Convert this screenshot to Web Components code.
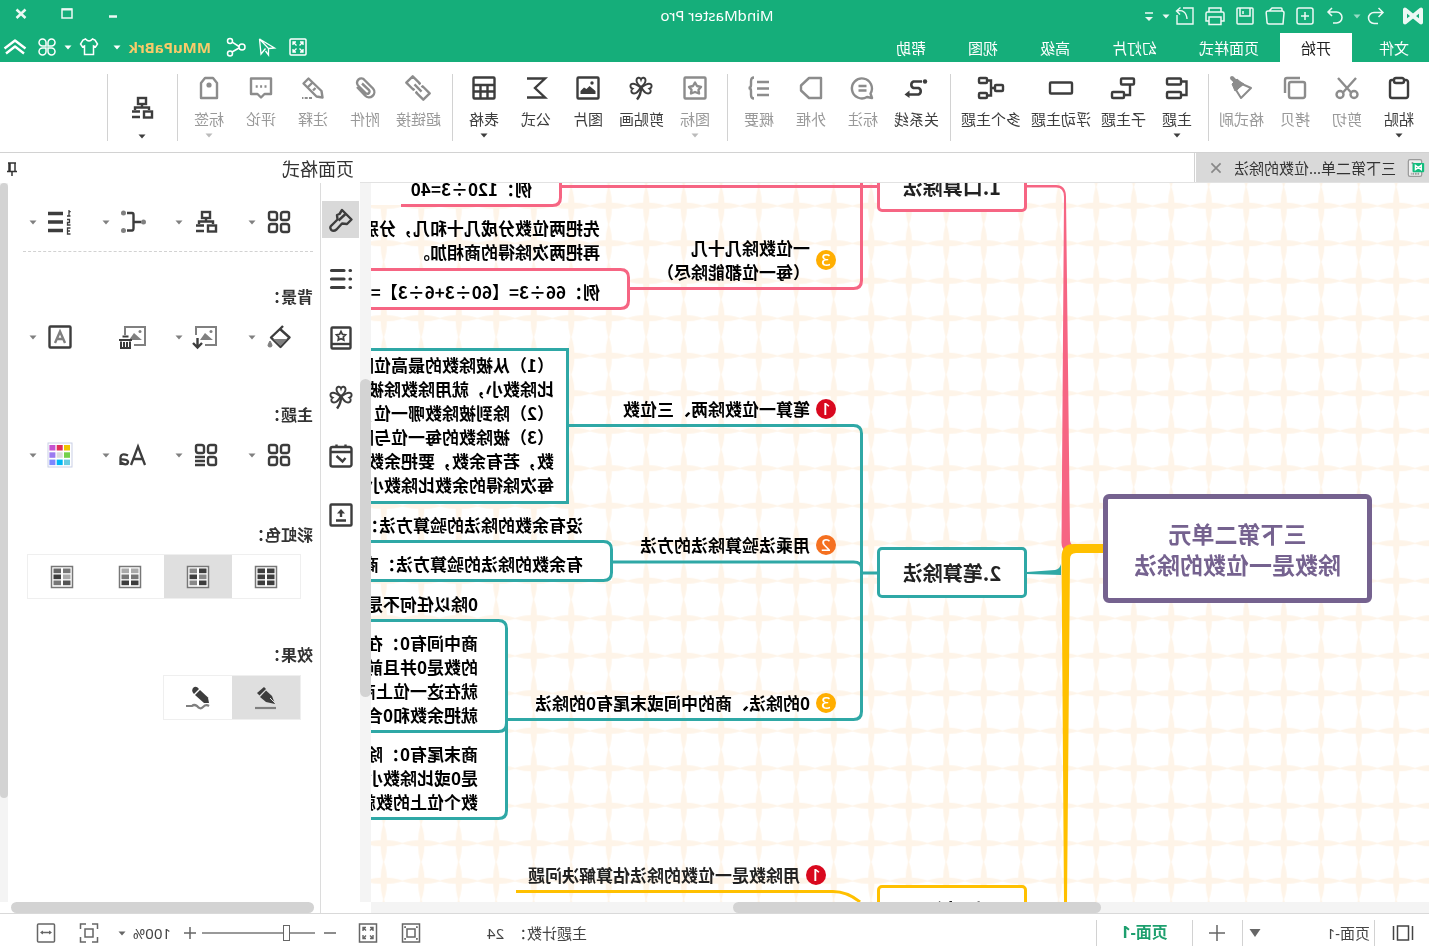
<!DOCTYPE html>
<html lang="zh-CN">
<head>
<meta charset="utf-8">
<title>MindMaster Pro</title>
<style>
  html, body { margin: 0; height: 100%; overflow: hidden; background: #fff; }
  body { font: 15px/20px "Noto Sans", "Noto Sans CJK SC", sans-serif; color: #333; }
</style>
</head>
<body>
<mind-app></mind-app>
<script>
const RESET = `
  *, *::before, *::after { box-sizing: border-box; }
  button { font: inherit; color: inherit; background: none; border: 0; padding: 0; margin: 0; display: inline-flex; align-items: center; justify-content: center; }
  a { color: inherit; text-decoration: none; }
`;
function define(name, html, setup) {
  customElements.define(name, class extends HTMLElement {
    constructor() {
      super();
      this.attachShadow({ mode: 'open' });
    }
    connectedCallback() {
      const t = document.createElement('template');
      t.innerHTML = `<style>${RESET}</style>` + (typeof html === 'function' ? html(this) : html);
      this.shadowRoot.replaceChildren(t.content.cloneNode(true));
      if (setup) setup(this);
    }
  });
}

const clover = '<g stroke-width="1.900"><path d="M12 11C8 8 7.500 6 7.500 4.500C7.500 1.500 11 .5 12 3.500C13 .5 16.500 1.500 16.500 4.500C16.500 6 16 8 12 11Z"/><path d="M11.500 11.500C9 16.500 7.500 17.500 5 17.500C2 17.500 1.500 14 3.500 12.700C.5 11.500 .8 7.700 4 7.700C7 7.700 9 9.500 11.500 11.500Z"/><path d="M12.500 11.500C15 16.500 16.500 17.500 19 17.500C22 17.500 22.500 14 20.500 12.700C23.500 11.500 23.200 7.700 20 7.700C17 7.700 15 9.500 12.500 11.500Z"/><path d="M12 12C12 17 13.500 20.500 16 23.500" stroke-width="2.400"/></g>';
const leafs = '<path d="M2 3.500Q2 2 3.500 2H7.500Q10 2 10 4.500V8.500Q10 10 8.500 10H4.500Q2 10 2 7.500Z"/><path d="M14 4.500Q14 2 16.500 2H20.500Q22 2 22 3.500V7.500Q22 10 19.500 10H15.500Q14 10 14 8.500Z"/><path d="M2 16.500Q2 14 4.500 14H8.500Q10 14 10 15.500V19.500Q10 22 7.500 22H3.500Q2 22 2 20.500Z"/>';
const tree = '<rect x="8" y="2" width="8" height="6"/><path d="M12 8V11M5 14V11.500H19V14"/><rect x="2" y="15.500" width="8" height="6"/><path d="M14 15.500H22M14 21H22"/>';
const tiles = c => '<rect x="1.500" y="1.500" width="21" height="21" stroke="#777" stroke-width="1.500" fill="#fff"/><g stroke="none">' +
  c.map((f, i) => `<rect x="${i % 2 ? 13 : 3.5}" y="${3.5 + Math.floor(i / 2) * 6}" width="7.500" height="4.700" fill="${f}"/>`).join('') + '</g>';
const pic = '<g stroke="#808080" stroke-width="2"><path d="M2 10V2H22V20H13"/></g><path d="M5 15L11 8L16 13V15Z" fill="#808080" stroke="none"/><circle cx="6.500" cy="6.500" r="1.500" fill="#808080" stroke="none"/>';
const picFlip = '<g stroke="#808080" stroke-width="2"><path d="M13 20H2V2H22V10"/></g><path d="M5 15L8 12.500L13 8L18 15Z" fill="#808080" stroke="none"/><circle cx="7" cy="6.500" r="1.500" fill="#808080" stroke="none"/>';
const ICONS = {
  logo: '<path d="M4 5.500V18.500L20 5.500V18.500Z" stroke-width="4" stroke-linejoin="round"/>',
  undo: '<path d="M9.500 4L5 8.500L9.500 13M5 8.500H14A5.500 5.500 0 0 1 14 19.500H10" stroke-width="1.500"/>',
  redo: '<path d="M15 4L19 8L15 12M19 8H10.500A5 5 0 0 0 10.500 19H14" stroke-width="1.500"/>',
  add: '<rect x="4" y="4" width="16" height="16" rx="2"/><path d="M12 8V16M8 12H16"/>',
  open: '<path d="M4 20L3 9Q3 7 5 7H19Q21 7 20.800 9L20 18Q20 20 18 20H4ZM5 7V5Q5 4 6 4H15L18 7" stroke-width="1.500"/>',
  save: '<rect x="4" y="4" width="16" height="16" rx="1"/><path d="M7 4V12H17V4M14 7V10"/>',
  print: '<path d="M6 8V4H18V8M6 17H3V9.500Q3 8 4.500 8H19.500Q21 8 21 9.500V17H18M6 13H18V20.500H6Z" stroke-width="1.500"/>',
  export: '<path d="M13 4H4V20H20V11M14 4H13M20 7Q11 5 10 15M16.500 3.500L20.500 7L17 10.500" stroke-width="1.400"/>',
  more: '<path d="M8 9H16" stroke-width="1.500"/><path d="M8 13H16L12 17Z" fill="currentColor" stroke="none"/>',
  min: '<path d="M8 14.500H16" stroke-width="2.500"/>',
  max: '<rect x="7" y="7" width="10" height="9"/><path d="M7 7.500H17" stroke-width="2"/>',
  close: '<path d="M7.500 7.500L16.500 16M16.500 7.500L7.500 16" stroke-width="2.500"/>',
  fit: '<rect x="4" y="4" width="16" height="16" rx="1" stroke-width="1.500"/><path d="M7 10V7H10M14 7H17V10M17 14V17H14M10 17H7V14M7 7L10.500 10.500M17 7L13.500 10.500M17 17L13.500 13.500M7 17L10.500 13.500" stroke-width="1.300"/>',
  cursor: '<path d="M19.500 4L4.500 13L10.500 13.500M19.500 4L18 19L13.500 13.500M19.500 4L10.500 13.500V20L13.500 16" stroke-width="1.300"/>',
  share: '<circle cx="6" cy="12" r="3"/><circle cx="18" cy="6" r="2.500"/><circle cx="18" cy="18.500" r="2.500"/><path d="M9 11.500L15.800 7.200M9 13L16 17"/>',
  shirt: '<path d="M8.500 4Q12 8 15.500 4L18 5L20.500 9L18.500 12L16.500 11V19.500H7.500V11L5.500 12L3.500 9L6 5Z" stroke-width="1.500"/>',
  cmd: '<path d="M11 11H7.500A3.500 3.500 0 1 1 11 7.500ZM13 11V7.500A3.500 3.500 0 1 1 16.500 11ZM11 13V16.500A3.500 3.500 0 1 1 7.500 13ZM13 13H16.500A3.500 3.500 0 1 1 13 16.500Z"/>',
  collapse: '<path d="M1.500 13.500L12 5.500L22.500 13.500M3 18.500L12 11.500L21 18.500" stroke-width="2.400" stroke-linejoin="round"/>',
  paste: '<rect x="3" y="4" width="18" height="18" rx="2"/><rect x="7" y="2" width="10" height="5" rx="2" fill="#fff"/>',
  cut: '<path d="M3 2L16.500 17M21 2L7.500 17"/><circle cx="5" cy="18.500" r="3.500"/><circle cx="19" cy="18.500" r="3.500"/>',
  copy: '<rect x="2" y="6" width="16" height="16" rx="2"/><path d="M7 2H20Q22 2 22 4V17"/>',
  brush: '<path d="M2 12L11 8L17 14L12 22Z" stroke-width="2" stroke-linejoin="round"/><path d="M18 5L21 2" stroke-width="4" stroke-linecap="round"/><path d="M9 8L13 5.500L16 3L21 8L18 15Z" fill="currentColor" stroke-width="1"/>',
  topic: '<path d="M8 5.500H2.500V19H8"/><rect x="8" y="2.500" width="14" height="6" rx="1"/><rect x="8" y="16" width="14" height="6" rx="1"/>',
  subtopic: '<rect x="1" y="2.500" width="13" height="6" rx="1"/><path d="M5 9V19H11"/><rect x="11" y="16" width="12" height="6" rx="1"/>',
  float: '<rect x="1" y="6.500" width="22" height="11" rx="1"/>',
  multi: '<rect x="0" y="9" width="8" height="6" rx="1"/><path d="M8 12H12M16 4.500H12V19.500H16"/><rect x="16" y="2" width="8" height="5" rx="1"/><rect x="16" y="17" width="8" height="5" rx="1"/>',
  relation: '<path d="M6 5.500H14.500A3.500 3.500 0 0 1 14.500 12H9.500A3.500 3.500 0 0 0 9.500 18.500H19" stroke-width="2.600"/><circle cx="3" cy="5.500" r="2.200" fill="currentColor" stroke="none"/><path d="M18.500 14.500L23.500 18.500L18.500 22Z" fill="currentColor" stroke="none"/>',
  callout: '<path d="M3 22L4.500 17.500A10 10 0 1 1 8 21Z" stroke-linejoin="round"/><path d="M8.500 10H16.500M8.500 14.500H16.500"/>',
  frame: '<path d="M2 2H14L22 9.500V14.500L14 22H2Z" stroke-linejoin="round"/>',
  summary: '<path d="M2 6H14M2 12.500H14M2 19H14M17 1.500Q20 1.500 20 5V9Q20 12 22.500 12Q20 12 20 15V19Q20 22.500 17 22.500"/>',
  star: '<rect x="1.500" y="1.500" width="21" height="21" rx="1"/><path d="M12 6.500L14 10L18 11L15.500 13.700L16 17.500L12 16L8 17.500L8.500 13.700L6 11L10 10Z" stroke-linejoin="round"/>',
  clover: clover,
  picture: '<rect x="1.500" y="1.500" width="21" height="21" rx="1"/><path d="M4.500 18V15L10.500 10L13.500 13L16 11.500L19.500 15V18Z" fill="currentColor" stroke="none"/><circle cx="8" cy="7" r="1.700" fill="currentColor" stroke="none"/>',
  sigma: '<path d="M21 2.500H3L13 12L3 21.500H21"/>',
  table: '<rect x="1.500" y="1.500" width="21" height="21" rx="1"/><path d="M2 9H22M2 15.500H22M8.500 9V22M15.500 9V22"/>',
  link: '<g transform="rotate(-45 12 12)" stroke-linejoin="round"><path d="M10 15V16.500H0V7.500H10V9M14 9V7.500H24V16.500H14V15M7 12H17"/></g>',
  clip: '<path d="M20 11L12 19.500A5 5 0 0 1 4 12.500L12.500 4A4 4 0 0 1 19 9.500L11.500 17A2 2 0 0 1 8 14L15 7.500"/>',
  pencil: '<path d="M2.500 21.500L3.500 15L16.500 2.500L21.500 7.500L8.500 20.500ZM12.500 6.500L17.500 11.500M9.500 12L12 14.500" stroke-linejoin="round"/><path d="M13 22H23" stroke-dasharray="3 1.300" stroke-width="2.200"/>',
  comment: '<path d="M2 2.500H22V18H15.500L12 21.500L8.500 18H2Z" stroke-linejoin="round"/><path d="M6.500 10.500H17.500" stroke-dasharray="2 2.400"/>',
  tag: '<path d="M4 7L8 2H16L20 7V22H4Z" stroke-linejoin="round"/><circle cx="12" cy="9" r="2.600" fill="currentColor" stroke="none"/>',
  tree: tree,
  doc: '<rect x="4" y="2" width="16" height="20" rx="2" fill="#eee" stroke="#9a9a9a" stroke-width="1.500"/><path d="M7 19H17M14 6H17" stroke="#9a9a9a" stroke-dasharray="2 1"/><rect x="1" y="6" width="14" height="11" rx="1" fill="#12bd7d" stroke="none"/><path d="M4.500 9V14L11.500 9V14Z" stroke="#fff" stroke-width="1.700"/>',
  x: '<path d="M6.500 6.500L17.500 17.500M17.500 6.500L6.500 17.500" stroke-width="2"/>',
  pin: '<path d="M8 6H16M9 6V14M14 6V14M15 6V14M7 14.500H17M12 14.500V19" stroke-width="1.500"/>',
  paint: '<path d="M11 2L1.500 11.500L6 16L11 15.500L16.500 21.500Q19.500 24 21.800 21.800Q24 19 21 17L15.500 11.500L16 7L13.500 6Z" stroke-linejoin="round"/><path d="M7.500 6L14.500 12.500"/>',
  list: '<path d="M2.500 3.500H3M2.500 12H3M2.500 20.500H3M9 3.500H21.500M9 12H21.500M9 20.500H21.500" stroke-width="3.200" stroke-linecap="round"/>',
  book: '<rect x="2.500" y="1.500" width="19" height="21" rx="1"/><path d="M3 18H21"/><path d="M12 5.500L13.400 8.300L16.500 8.800L14.300 11L14.800 14.100L12 12.700L9.200 14.100L9.700 11L7.500 8.800L10.600 8.300Z" stroke-width="1.700"/>',
  calendar: '<rect x="1.500" y="3" width="21" height="19.500" rx="2"/><path d="M2 8H22M7.500 .5V4M16.500 .5V4M16.500 12L10.500 17.500L7.500 14"/>',
  upload: '<rect x="1.500" y="1.500" width="21" height="21" rx="1"/><path d="M7 17.500H17M12 14V8"/><path d="M8 10.500L12 6L16 10.500Z" fill="currentColor" stroke="none"/>',
  leafs: leafs + '<path d="M14 15.500Q14 14 15.500 14H19.500Q22 14 22 16.500V20.500Q22 22 20.500 22H16.500Q14 22 14 19.500Z"/>',
  leaflist: leafs + '<path d="M13 14H23M13 18H23M13 22H23"/>',
  branch: '<circle cx="1.500" cy="12" r="2.500" fill="#808080" stroke="none"/><path d="M4 12H11M18 3H13Q11.500 3 11.500 5V18Q11.500 20.500 13 20.500H18"/><circle cx="21.500" cy="3" r="2.500" fill="#808080" stroke="none"/><circle cx="21.500" cy="20.500" r="2.500" fill="#808080" stroke="none"/>',
  number: '<path d="M9 3.500H24M9 12H24M9 20.500H24" stroke-width="3.500"/><path d="M3 0V6M1.500 2L3 .5M1.500 6H5M5 9.500H2.500V12.500H4.500V15H1.500M1.500 18H4.500V24H1.500M2 21H4.500" stroke-width="1.300"/>',
  bucket: '<path d="M8 1L11 4L1.500 12.500L10.500 22L20 12.500L10 3" stroke-linejoin="round"/><path d="M4 14H18L10.500 21Z" fill="#808080" stroke="none"/><path d="M21 16Q25 22 21 22Q17 22 21 16Z" fill="#808080" stroke="#808080" stroke-width="1"/>',
  picdown: picFlip + '<path d="M20.500 13V22M16 18L20.500 22.500L25 18" stroke-width="2.400"/>',
  picdel: '<g transform="translate(-2 0)">' + picFlip + '</g><path d="M13 15H26M16.500 11.500H22.500M15 16.500V23H24V16.500M18 17V22M21 17V22" stroke-width="2"/>',
  boxa: '<rect x="1.500" y="1.500" width="21" height="21" rx="1"/><path d="M7 18L12 6.500L17 18M9 14H15" stroke="#808080"/>',
  palette: '<rect x="0" y="0" width="24" height="24" stroke="#c9cfe6" stroke-width="1" fill="#fff"/><g stroke="none">' +
    ['#f0c400', '#e0305a', '#c552cf', '#74d04a', '#dcdcdc', '#9a7bf0', '#67cbe0', '#00b8f5', '#7c86ff'].map((c, i) => `<rect x="${2 + i % 3 * 7.3}" y="${2 + Math.floor(i / 3) * 7.3}" width="6" height="5.500" fill="${c}"/>`).join('') + '</g>',
  aa: '<path d="M0 22L7 3.500L14 22M2.500 16H11.500" stroke-width="2.300"/><path d="M17 12.500Q24 9.500 24.500 14.500V22M24.500 16.500Q16.500 16 17 19.500Q18.500 23.500 24.500 19" stroke-width="2.300"/>',
  tiles1: tiles(['#3d3d3d', '#3d3d3d', '#3d3d3d', '#3d3d3d', '#3d3d3d', '#3d3d3d']),
  tiles2: tiles(['#3d3d3d', '#888', '#888', '#3d3d3d', '#3d3d3d', '#888']),
  tiles3: tiles(['#aaa', '#aaa', '#777', '#777', '#3d3d3d', '#3d3d3d']),
  tiles4: tiles(['#777', '#666', '#aaa', '#3d3d3d', '#555', '#777']),
  pen: '<path d="M2 22H23" stroke="#808080" stroke-width="2.200"/><path d="M3 18L6 10L12 4.500L18 11L12 16Z" fill="currentColor" stroke="none"/><path d="M14 1L21 7L18.500 9.500L12 3Z" fill="currentColor" stroke="none"/><path d="M3 17L8 12" stroke="#dfdfdf" stroke-width="1"/>',
  crayon: '<path d="M1 20Q4 18 7 21T13 20Q16 18 18 20H24" stroke="#808080" stroke-width="2.200"/><path d="M1 17L2 11.500L10 4L15 9L6 17Z" fill="currentColor" stroke="none"/><path d="M11 3Q14 -1 17 2Q19 5 16 8Z" fill="currentColor" stroke="none"/>',
  pages: '<path d="M2.500 5V19M21.500 5V19" stroke-width="1.500"/><rect x="6.500" y="5" width="11" height="14" stroke-width="1.500"/>',
  plus: '<path d="M12 4V20M4 12H20" stroke-width="1.500"/>',
  minus: '<path d="M6 12H18" stroke-width="1.500"/>',
  splus: '<path d="M12 6V18M6 12H18" stroke-width="1.500"/>',
  view: '<rect x="3.500" y="3" width="17" height="18"/><rect x="8" y="8" width="8" height="8"/><path d="M6 7V6H7M17 6H18V7M18 17V18H17M7 18H6V17" stroke-width="1.500"/>',
  full: '<rect x="3.500" y="3" width="17" height="18"/><path d="M7 10V6.500H10M14 6.500H17V10M17 14V17.500H14M10 17.500H7V14M7.500 7L10 9.500M16.500 7L14 9.500M16.500 17L14 14.500M7.500 17L10 14.500" stroke-width="1.400"/>',
  focus: '<path d="M3.500 8V3H9M15 3H20.500V8M20.500 16V21H15M9 21H3.500V16"/><rect x="8" y="8" width="8" height="8"/>',
  width: '<rect x="3.500" y="3" width="17" height="18" rx="1"/><path d="M7 11.500H17"/><path d="M6 11.500L9 9.500V13.500ZM18 11.500L15 9.500V13.500Z" fill="currentColor" stroke="none"/>',
  caret: '<path d="M8.500 10.500H15.500L12 14.500Z" fill="currentColor" stroke="none"/>',
  bigcaret: '<path d="M6.500 8H17.500L12 16Z" fill="currentColor" stroke="none"/>'
};
define('mm-icon', el => {
  const s = el.getAttribute('size') || 24;
  return `<style>:host{display:inline-flex;flex:none}svg{display:block;overflow:visible}</style>
  <svg width="${s}" height="${s}" viewBox="0 0 24 24" fill="none" stroke="currentColor" stroke-width="${el.getAttribute('weight') || 2.4}" aria-hidden="true">${ICONS[el.getAttribute('name')]}</svg>`;
});

define('title-bar', `
<style>
  :host { display: grid; grid-template-columns: 1fr auto 1fr; align-items: center; height: 32px; padding: 0 9px 0 4px; background: #15ae7a; color: #fff; }
  nav { display: flex; align-items: center; }
  nav button { width: 30px; height: 24px; }
  nav .logo { width: 24px; margin-right: 10px; }
  nav .c { width: 14px; margin-left: -3px; }
  nav .m { width: 20px; }
  nav .dim { opacity: .6; }
  nav mm-icon { opacity: .92; }
  h1 { margin: 0; padding-bottom: 2px; font-size: 15px; font-weight: 400; line-height: 20px; }
  .win { justify-content: flex-end; gap: 22px; padding-bottom: 4px; }
  .win button { width: 24px; }
</style>
<nav aria-label="快速访问">
  <button class="logo" aria-label="MindMaster"><mm-icon name="logo"></mm-icon></button>
  <button aria-label="撤销"><mm-icon name="undo"></mm-icon></button>
  <button class="c dim" aria-label="撤销列表"><mm-icon name="caret"></mm-icon></button>
  <button aria-label="重做"><mm-icon name="redo"></mm-icon></button>
  <button aria-label="新建"><mm-icon name="add" weight="1.5"></mm-icon></button>
  <button aria-label="打开"><mm-icon name="open"></mm-icon></button>
  <button aria-label="保存"><mm-icon name="save" weight="1.5"></mm-icon></button>
  <button aria-label="打印"><mm-icon name="print"></mm-icon></button>
  <button aria-label="导出"><mm-icon name="export"></mm-icon></button>
  <button class="c" aria-label="导出列表"><mm-icon name="caret"></mm-icon></button>
  <button class="m" aria-label="自定义"><mm-icon name="more"></mm-icon></button>
</nav>
<h1>MindMaster Pro</h1>
<nav class="win" aria-label="窗口">
  <button aria-label="最小化"><mm-icon name="min"></mm-icon></button>
  <button aria-label="最大化"><mm-icon name="max" weight="1.5"></mm-icon></button>
  <button aria-label="关闭"><mm-icon name="close"></mm-icon></button>
</nav>`);

define('menu-bar', `
<style>
  :host { display: flex; height: 30px; background: #15ae7a; color: #fff; }
  nav { display: flex; padding: 1px 0 0 5px; }
  nav button { padding: 0 21px; font-size: 15px; }
  nav button:first-child { padding: 0 27px 0 15px; }
  nav button[aria-selected=true] { background: #fff; color: #222; }
  .tools { margin-left: auto; display: flex; align-items: center; gap: 7px; padding-right: 3px; }
  .user { color: #f8cb6a; font-weight: 700; margin-left: 6px; width: 85px; justify-content: flex-start; }
  .c { width: 12px; margin: 0 -4px; }
  .s { margin-left: 7px; }
  .end { margin-left: 1px; }
</style>
<nav role="tablist">
  <button role="tab">文件</button><button role="tab" aria-selected="true">开始</button><button role="tab">页面样式</button><button role="tab">幻灯片</button><button role="tab">高级</button><button role="tab">视图</button><button role="tab">帮助</button>
</nav>
<div class="tools">
  <button aria-label="适应"><mm-icon name="fit"></mm-icon></button>
  <button aria-label="发送"><mm-icon name="cursor"></mm-icon></button>
  <button aria-label="分享"><mm-icon name="share" weight="1.5"></mm-icon></button>
  <button class="user">MMuPaBrk</button>
  <button class="c" aria-label="账户"><mm-icon name="caret"></mm-icon></button>
  <button class="s" aria-label="皮肤"><mm-icon name="shirt"></mm-icon></button>
  <button class="c" aria-label="皮肤列表"><mm-icon name="caret"></mm-icon></button>
  <button aria-label="更多"><mm-icon name="cmd" weight="1.5"></mm-icon></button>
  <button class="end" aria-label="收起"><mm-icon name="collapse"></mm-icon></button>
</div>`);

define('ribbon-item', el => `
<style>
  :host { display: block; }
  button { flex-direction: column; justify-content: flex-start; min-width: 52px; height: 76px; padding: 2px 5px 0; color: #3d3d3d; white-space: nowrap; }
  :host([dim]) button { color: #8c8c8c; }
  :host([dim]) span { color: #999; }
  :host([dim]) .c { color: #bbb; }
  :host([solo]) button { width: 58px; padding-top: 22px; }
  span { font-size: 15px; line-height: 20px; margin-top: 9px; }
  .c { width: 24px; height: 12px; display: flex; align-items: center; }
  :host([solo]) .c { margin-top: 10px; }
</style>
<button aria-label="${el.getAttribute('label') || '布局'}"><mm-icon name="${el.getAttribute('icon')}"></mm-icon>${el.hasAttribute('label') ? `<span>${el.getAttribute('label')}</span>` : ''}${el.hasAttribute('menu') ? '<i class="c"><mm-icon name="caret"></mm-icon></i>' : ''}</button>`);

define('ribbon-group', `
<style>
  :host { display: flex; padding: 0 5px; border-right: 1px solid #d2d2d2; height: 67px; }
</style><slot></slot>`);

define('tool-ribbon', `
<style>
  :host { display: flex; height: 91px; padding: 12px 0 0 0; border-bottom: 1px solid #d2d2d2; background: #fff; }
  ribbon-group { padding-left: 6px; }
  ribbon-group:first-of-type { padding-left: 4px; }
  ribbon-group:nth-of-type(2) { padding-left: 5px; }
</style>
<ribbon-group>
  <ribbon-item icon="paste" label="粘贴" menu></ribbon-item><ribbon-item dim icon="cut" label="剪切"></ribbon-item><ribbon-item dim icon="copy" label="拷贝"></ribbon-item><ribbon-item dim icon="brush" label="格式刷"></ribbon-item>
</ribbon-group>
<ribbon-group>
  <ribbon-item icon="topic" label="主题" menu></ribbon-item><ribbon-item icon="subtopic" label="子主题"></ribbon-item><ribbon-item icon="float" label="浮动主题"></ribbon-item><ribbon-item icon="multi" label="多个主题"></ribbon-item>
</ribbon-group>
<ribbon-group>
  <ribbon-item icon="relation" label="关系线"></ribbon-item><ribbon-item dim icon="callout" label="标注"></ribbon-item><ribbon-item dim icon="frame" label="外框"></ribbon-item><ribbon-item dim icon="summary" label="概要"></ribbon-item>
</ribbon-group>
<ribbon-group>
  <ribbon-item dim icon="star" label="图标" menu></ribbon-item><ribbon-item icon="clover" label="剪贴画"></ribbon-item><ribbon-item icon="picture" label="图片"></ribbon-item><ribbon-item icon="sigma" label="公式"></ribbon-item><ribbon-item icon="table" label="表格" menu></ribbon-item>
</ribbon-group>
<ribbon-group>
  <ribbon-item dim icon="link" label="超链接"></ribbon-item><ribbon-item dim icon="clip" label="附件"></ribbon-item><ribbon-item dim icon="pencil" label="注释"></ribbon-item><ribbon-item dim icon="comment" label="评论"></ribbon-item><ribbon-item dim icon="tag" label="标签" menu></ribbon-item>
</ribbon-group>
<ribbon-group><ribbon-item solo icon="tree" menu></ribbon-item></ribbon-group>`);

define('doc-tabs', `
<style>
  :host { display: flex; height: 30px; border-bottom: 1px solid #e2e2e2; background: #fff; }
  .tab { display: flex; align-items: center; background: #d9d9d9; padding: 0 8px 0 4px; color: #333; }
  .tab span { font-size: 15px; margin-left: 9px; }
  .x { color: #888; margin-left: 6px; width: 24px; }
  .sep { width: 1px; background: #d2d2d2; margin-left: 1px; }
</style>
<div class="tab"><mm-icon name="doc" size="20"></mm-icon><span>三下第二单...位数的除法</span><button class="x" aria-label="关闭"><mm-icon name="x" size="20"></mm-icon></button></div><div class="sep"></div>`);

/* A topic sits at a free position on the canvas. */
define('map-topic', el => {
  const n = el.getAttribute('badge');
  const colors = { 1: '#d9081e', 2: '#f57020', 3: '#ffae00' };
  return `
<style>
  :host { display: flex; align-items: center; gap: 6px; position: absolute; left: ${el.getAttribute('x')}px; top: ${el.getAttribute('y')}px; white-space: nowrap; font: 700 17px/24px "Noto Sans CJK SC", sans-serif; color: #000; }
  :host([kind=main]) { width: 150px; height: 51px; justify-content: center; background: #fff; border: 3px solid var(--line); border-radius: 5px; font-size: 20px; color: #222; }
  :host([kind=root]) { width: 269px; height: 109px; justify-content: center; text-align: center; background: #fff; border: 5px solid #75628f; border-radius: 6px; font-size: 23px; line-height: 31px; color: #75628f; }
  :host([kind=soft]) { color: #222; }
  b { width: 20px; height: 20px; border-radius: 10px; background: ${colors[n] || 'none'}; color: #fff; font: 500 17px/20px "Noto Sans", sans-serif; text-align: center; }
</style>${n ? `<b>${n}</b>` : ''}<div><slot></slot></div>`;
});

define('mind-canvas', `
<style>
  :host { display: block; position: relative; overflow: hidden; background: #fff; flex: 1; min-width: 0; }
  svg { position: absolute; left: 0; top: 0; width: 100%; height: 100%; }
</style>
<svg aria-hidden="true" fill="none" stroke-width="3">
  <defs><pattern id="grid" x="14" y="4" width="37.5" height="37.5" patternUnits="userSpaceOnUse">
    <g fill="#fef4e8"><path d="M0 18.500Q8 15.500 18.750 15.500T37.500 18.500V19.500Q29 22 18.750 22T0 19.500Z"/><path d="M18.500 0Q15.500 8 15.500 18.750T18.500 37.500H19.500Q22 29 22 18.750T19.500 0Z"/></g>
  </pattern></defs>
  <rect width="100%" height="100%" fill="url(#grid)"/>
  <g fill="#fff">
    <rect x="800" y="86" width="400" height="40"/><rect x="861" y="166" width="400" height="154"/><rect x="817" y="358" width="400" height="40"/><rect x="922" y="437" width="400" height="198"/><path d="M868 0H1200V22H868Z"/>
  </g>
  <g fill="#f66583">
    <path d="M402 2H373Q363 2 363 14L359 358Q358 363 353 364L362 370Q368 366 367.500 358L365 14Q365 4.500 373 4.500H402Z"/>
  </g>
  <g stroke="#f66583">
    <path d="M551 3.500H868M567.500 0V97.500Q567.500 105.500 575.500 105.500H800M868.500 0V14.500Q868.500 22.500 876.500 22.500H1028"/>
    <path d="M1300 86.500H808.500Q800.500 86.500 800.500 94.500V117.500Q800.500 125.500 808.500 125.500H1300"/>
  </g>
  <path fill="#2fa8a6" d="M402 389L374 387Q369 386 368 381V392L402 391Z"/>
  <g stroke="#2fa8a6">
    <path d="M551 390H567M862 242.500H575.500Q567.500 242.500 567.500 250.500V528.500Q567.500 536.500 575.500 536.500H922M567.500 390V385Q567.500 379 575.500 379H817"/>
    <path d="M1300 166.500H861.500V319.500H1300M1300 358.500H825.500Q817.500 358.500 817.500 366.500V389.500Q817.500 397.500 825.500 397.500H1300"/>
    <path d="M1300 437.500H930.500Q922.500 437.500 922.500 445.500V627.500Q922.500 635.500 930.500 635.500H1300M922.500 540Q922.500 548.500 930.500 548.500H1300"/>
  </g>
  <path fill="#ffc000" d="M326 361H355Q367.500 361 367.500 374L365 719H362L359 376Q359 370 353 370H326Z"/>
  <path stroke="#ffc000" d="M569 719Q582 708.500 596 708.500H913"/>
</svg>
<map-topic kind="root" x="57" y="311">三下第二单元<br>除数是一位数的除法</map-topic>
<map-topic kind="main" style="--line:#f66583" x="402" y="-22">1.口算除法</map-topic>
<map-topic kind="main" style="--line:#2fa8a6" x="402" y="364">2.笔算除法</map-topic>
<map-topic kind="main" style="--line:#ffc000" x="402" y="702">3.解决问题</map-topic>
<map-topic badge="3" x="593" y="53">一位数除几十几<br>（每一位都能除尽）</map-topic>
<map-topic badge="1" x="593" y="214">笔算一位数除两、三位数</map-topic>
<map-topic badge="2" x="593" y="350">用乘法验算除法的方法</map-topic>
<map-topic badge="3" x="593" y="508">0的除法、商的中间或末尾有0的除法</map-topic>
<map-topic badge="1" kind="soft" x="603" y="680">用除数是一位数的除法估算解决问题</map-topic>
<map-topic x="897" y="-6">例：120÷3=40</map-topic>
<map-topic x="829" y="33">先把两位数分成几十和几，分别<br>再把两次除得的商相加。</map-topic>
<map-topic x="829" y="97">例：66÷3=【60÷3+6÷3】=2</map-topic>
<map-topic x="875" y="170">（1）从被除数的最高位除<br>比除数小，就用除数除被<br>（2）除到被除数哪一位，<br>（3）被除数的每一位与除<br>数，若有余数，要把余数<br>每次除得的余数比除数小</map-topic>
<map-topic x="846" y="330">没有余数的除法的验算方法：</map-topic>
<map-topic x="846" y="369">有余数的除法的验算方法：商</map-topic>
<map-topic x="951" y="409">0除以任何不是</map-topic>
<map-topic x="951" y="448">商中间有0：在<br>的数是0并且前<br>就在这一位上商<br>就把余数和0合</map-topic>
<map-topic x="951" y="559">商末尾有0：除<br>是0或比除数小<br>数个位上的数就</map-topic>`);

/* Scroll track; start and span are percentages of the track. */
define('scroll-track', el => `
<style>
  :host { display: flex; flex-direction: ${el.hasAttribute('vertical') ? 'column' : 'row'}; background: ${el.hasAttribute('bare') ? 'none' : '#f4f4f4'}; }
  i { flex: 0 0 ${el.getAttribute('start')}%; }
  b { flex: 0 0 ${el.getAttribute('span')}%; background: #d3d3d3; border-radius: 6px; }
</style><i></i><b></b>`);

define('side-rail', `
<style>
  :host { display: flex; flex-direction: column; align-items: center; gap: 22px; width: 40px; padding: 18px 1px 0 0; border-right: 1px solid #dcdcdc; color: #3d3d3d; }
  button { width: 37px; height: 37px; flex: none; }
  button[aria-pressed=true] { background: #d9d9d9; }
</style>
<button aria-label="页面格式" aria-pressed="true"><mm-icon name="paint"></mm-icon></button>
<button aria-label="大纲"><mm-icon name="list"></mm-icon></button>
<button aria-label="图标"><mm-icon name="book"></mm-icon></button>
<button aria-label="剪贴画"><mm-icon name="clover"></mm-icon></button>
<button aria-label="任务"><mm-icon name="calendar"></mm-icon></button>
<button aria-label="导出"><mm-icon name="upload"></mm-icon></button>`);

define('drop-tool', el => `
<style>
  :host { display: block; color: #3d3d3d; }
  button { gap: 3px; height: 28px; }
  .c { color: #808080; }
</style>
<button aria-label="${el.getAttribute('label')}"><mm-icon name="${el.getAttribute('icon')}"></mm-icon>${el.hasAttribute('plain') ? '' : '<mm-icon class="c" name="caret"></mm-icon>'}</button>`);

define('choice-bar', el => `
<style>
  :host { display: flex; width: max-content; border: 1px solid #efefef; color: #3d3d3d; }
  label { position: relative; width: 68px; height: 43px; display: flex; align-items: center; justify-content: center; }
  label:has(:checked) { background: #dfdfdf; }
  input { position: absolute; inset: 0; width: 100%; height: 100%; margin: 0; opacity: 0; }
</style>${el.getAttribute('icons').split(' ').map((n, i) => `<label><input type="radio" name="c" aria-label="${n}" ${i == el.getAttribute('value') ? 'checked' : ''}><mm-icon name="${n}"></mm-icon></label>`).join('')}`);

define('format-panel', `
<style>
  :host { display: flex; flex-direction: column; width: 360px; flex: none; background: #fff; }
  header { display: flex; align-items: center; justify-content: space-between; height: 30px; padding: 1px 0 0 6px; }
  h2 { margin: 0; font-size: 18px; line-height: 24px; font-weight: 400; color: #333; }
  .main { display: flex; flex: 1; min-height: 0; }
  .body { flex: 1; display: flex; flex-direction: column; padding: 24px 15px 0 7px; min-width: 0; }
  .row { display: grid; grid-template-columns: repeat(4, 73px); height: 32px; align-items: center; padding-left: 22px; flex: none; }
  .first { height: 45px; padding-bottom: 13px; border-bottom: 1px dashed #d2d2d2; }
  h3 { margin: 49px 0 13px; font-size: 16px; line-height: 24px; font-weight: 700; color: #333; }
  .first + h3 { margin-top: 33px; }
  choice-bar { margin: 0 0 32px 12px; }
  .r { margin: 51px 0 7px; }
  choice-bar + h3 { margin: 12px 0 8px; }
  scroll-track[vertical] { width: 8px; }
  .foot { display: flex; height: 11px; }
  .foot::before { content: ""; width: 40px; border-right: 1px solid #dcdcdc; }
  .foot scroll-track { flex: 1; margin-right: 8px; }
</style>
<header><h2>页面格式</h2><button aria-label="固定"><mm-icon name="pin"></mm-icon></button></header>
<div class="main">
  <side-rail></side-rail>
  <div class="body">
    <div class="row first"><drop-tool icon="leafs" label="布局"></drop-tool><drop-tool icon="tree" label="结构"></drop-tool><drop-tool icon="branch" label="连线"></drop-tool><drop-tool icon="number" label="编号"></drop-tool></div>
    <h3>背景：</h3>
    <div class="row"><drop-tool icon="bucket" label="填充"></drop-tool><drop-tool icon="picdown" label="背景图片"></drop-tool><drop-tool plain icon="picdel" label="删除背景"></drop-tool><drop-tool icon="boxa" label="水印"></drop-tool></div>
    <h3>主题：</h3>
    <div class="row"><drop-tool icon="leafs" label="主题"></drop-tool><drop-tool icon="leaflist" label="主题样式"></drop-tool><drop-tool icon="aa" label="字体"></drop-tool><drop-tool icon="palette" label="配色"></drop-tool></div>
    <h3 class="r">彩虹色：</h3>
    <choice-bar icons="tiles1 tiles2 tiles3 tiles4" value="1"></choice-bar>
    <h3>效果：</h3>
    <choice-bar icons="pen crayon" value="0"></choice-bar>
  </div>
  <scroll-track vertical start="0" span="85.5"></scroll-track>
</div>
<div class="foot"><scroll-track bare start="2" span="97"></scroll-track></div>`);

define('status-bar', `
<style>
  :host { display: flex; height: 33px; border-top: 1px solid #d9d9d9; background: #fff; color: #444; align-items: center; padding: 0 34px 0 14px; font-size: 15px; }
  .v { width: 1px; align-self: stretch; background: #d2d2d2; margin-top: 6px; }
  .pg { width: 24px; margin-right: 16px; padding-top: 6px; }
  .sel { position: relative; display: flex; align-items: center; width: 131px; padding-top: 6px; }
  select { appearance: none; border: 0; background: none; font: inherit; color: inherit; padding: 0 0 0 4px; margin: 0; width: 100%; height: 24px; }
  .sel mm-icon { position: absolute; right: 0; top: 6px; pointer-events: none; color: #666; }
  .add { width: 49px; color: #666; padding-top: 6px; }
  .page { width: 95px; text-align: center; color: #1d9f6e; font-weight: 700; font-size: 16px; padding-top: 4px; }
  .count { margin-left: auto; margin-right: 64px; white-space: pre; padding-top: 6px; }
  .t { width: 24px; color: #666; padding-top: 6px; margin-right: 19px; }
  .t.m { margin-right: 14px; } .t.n { margin-right: 3px; } .t.p { margin-right: 7px; }
  .t:last-child { margin-right: 0; }
  input { appearance: none; width: 113px; height: 16px; margin: 6px 0 0; background: linear-gradient(#999, #999) center / 100% 2px no-repeat; }
  input::-webkit-slider-thumb { appearance: none; width: 7px; height: 16px; border: 1px solid #666; background: #fff; }
  .z { padding-top: 6px; width: 40px; white-space: nowrap; }
  .c { width: 12px; padding-top: 6px; margin: 0 15px 0 3px; color: #666; }
</style>
<button class="pg" aria-label="页面列表"><mm-icon name="pages"></mm-icon></button>
<i class="v"></i>
<label class="sel"><select aria-label="页面"><option>页面-1</option></select><mm-icon name="bigcaret"></mm-icon></label>
<i class="v"></i>
<button class="add" aria-label="添加页面"><mm-icon name="plus"></mm-icon></button>
<i class="v"></i>
<a class="page" href="#">页面-1</a>
<i class="v"></i>
<span class="count">主题计数：  24</span>
<button class="t" aria-label="视图"><mm-icon name="view" weight="1.5"></mm-icon></button>
<button class="t m" aria-label="全屏"><mm-icon name="full" weight="1.5"></mm-icon></button>
<button class="t n" aria-label="缩小"><mm-icon name="minus"></mm-icon></button>
<input type="range" min="0" max="100" value="24" aria-label="缩放">
<button class="t p" aria-label="放大"><mm-icon name="splus"></mm-icon></button>
<span class="z">100%</span>
<button class="c" aria-label="缩放列表"><mm-icon name="caret"></mm-icon></button>
<button class="t" aria-label="聚焦"><mm-icon name="focus" weight="1.5"></mm-icon></button>
<button class="t" aria-label="适应宽度"><mm-icon name="width" weight="1.5"></mm-icon></button>`);

/* The window is shown as seen in a mirror: it is laid out left to right, then flipped as a whole. */
define('mind-app', `
<style>
  :host { display: flex; flex-direction: column; height: 100vh; overflow: hidden; transform: scaleX(-1); }
  .work { display: flex; flex: 1; min-height: 0; }
  .doc { display: flex; flex-direction: column; flex: 1; min-width: 0; }
  .view { display: flex; flex: 1; min-height: 0; }
  .view scroll-track { width: 11px; }
  .h { height: 11px; margin-right: 11px; }
</style>
<title-bar></title-bar>
<menu-bar></menu-bar>
<tool-ribbon></tool-ribbon>
<div class="work">
  <div class="doc">
    <doc-tabs></doc-tabs>
    <div class="view"><mind-canvas></mind-canvas><scroll-track vertical start="27.3" span="44.2"></scroll-track></div>
    <scroll-track class="h" start="31" span="34.8"></scroll-track>
  </div>
  <format-panel></format-panel>
</div>
<status-bar></status-bar>`);
</script>
</body>
</html>
